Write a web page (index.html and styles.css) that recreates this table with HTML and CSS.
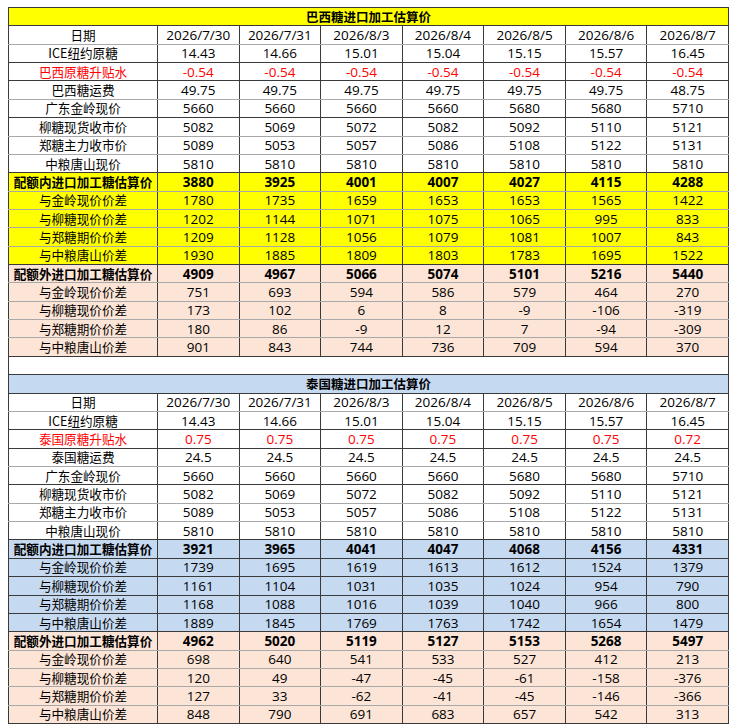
FILE: index.html
```html
<!DOCTYPE html>
<html lang="zh-CN">
<head>
<meta charset="utf-8">
<title>进口加工糖估算价</title>
<link rel="stylesheet" href="styles.css">
</head>
<body>
<table class="grid">
<colgroup><col class="c-lbl"><col><col><col><col><col><col><col></colgroup>
<tbody>
<tr class="title yellow"><td colspan="8">巴西糖进口加工估算价</td></tr>
<tr class="lt"><td class="lbl">日期</td><td>2026/7/30</td><td>2026/7/31</td><td>2026/8/3</td><td>2026/8/4</td><td>2026/8/5</td><td>2026/8/6</td><td>2026/8/7</td></tr>
<tr><td class="lbl">ICE纽约原糖</td><td>14.43</td><td>14.66</td><td>15.01</td><td>15.04</td><td>15.15</td><td>15.57</td><td>16.45</td></tr>
<tr class="red"><td class="lbl">巴西原糖升贴水</td><td>-0.54</td><td>-0.54</td><td>-0.54</td><td>-0.54</td><td>-0.54</td><td>-0.54</td><td>-0.54</td></tr>
<tr class="lt"><td class="lbl">巴西糖运费</td><td>49.75</td><td>49.75</td><td>49.75</td><td>49.75</td><td>49.75</td><td>49.75</td><td>48.75</td></tr>
<tr><td class="lbl">广东金岭现价</td><td>5660</td><td>5660</td><td>5660</td><td>5660</td><td>5680</td><td>5680</td><td>5710</td></tr>
<tr class="lt"><td class="lbl">柳糖现货收市价</td><td>5082</td><td>5069</td><td>5072</td><td>5082</td><td>5092</td><td>5110</td><td>5121</td></tr>
<tr class="lt"><td class="lbl">郑糖主力收市价</td><td>5089</td><td>5053</td><td>5057</td><td>5086</td><td>5108</td><td>5122</td><td>5131</td></tr>
<tr><td class="lbl">中粮唐山现价</td><td>5810</td><td>5810</td><td>5810</td><td>5810</td><td>5810</td><td>5810</td><td>5810</td></tr>
<tr class="yellow bold lt"><td class="lbl">配额内进口加工糖估算价</td><td>3880</td><td>3925</td><td>4001</td><td>4007</td><td>4027</td><td>4115</td><td>4288</td></tr>
<tr class="yellow lt"><td class="lbl">与金岭现价价差</td><td>1780</td><td>1735</td><td>1659</td><td>1653</td><td>1653</td><td>1565</td><td>1422</td></tr>
<tr class="yellow lt"><td class="lbl">与柳糖现价价差</td><td>1202</td><td>1144</td><td>1071</td><td>1075</td><td>1065</td><td>995</td><td>833</td></tr>
<tr class="yellow lt"><td class="lbl">与郑糖期价价差</td><td>1209</td><td>1128</td><td>1056</td><td>1079</td><td>1081</td><td>1007</td><td>843</td></tr>
<tr class="yellow"><td class="lbl">与中粮唐山价差</td><td>1930</td><td>1885</td><td>1809</td><td>1803</td><td>1783</td><td>1695</td><td>1522</td></tr>
<tr class="peach bold lt"><td class="lbl">配额外进口加工糖估算价</td><td>4909</td><td>4967</td><td>5066</td><td>5074</td><td>5101</td><td>5216</td><td>5440</td></tr>
<tr class="peach lt"><td class="lbl">与金岭现价价差</td><td>751</td><td>693</td><td>594</td><td>586</td><td>579</td><td>464</td><td>270</td></tr>
<tr class="peach lt"><td class="lbl">与柳糖现价价差</td><td>173</td><td>102</td><td>6</td><td>8</td><td>-9</td><td>-106</td><td>-319</td></tr>
<tr class="peach lt"><td class="lbl">与郑糖期价价差</td><td>180</td><td>86</td><td>-9</td><td>12</td><td>7</td><td>-94</td><td>-309</td></tr>
<tr class="peach"><td class="lbl">与中粮唐山价差</td><td>901</td><td>843</td><td>744</td><td>736</td><td>709</td><td>594</td><td>370</td></tr>
<tr class="spacer"><td colspan="8"></td></tr>
<tr class="title blue"><td colspan="8">泰国糖进口加工估算价</td></tr>
<tr class="lt"><td class="lbl">日期</td><td>2026/7/30</td><td>2026/7/31</td><td>2026/8/3</td><td>2026/8/4</td><td>2026/8/5</td><td>2026/8/6</td><td>2026/8/7</td></tr>
<tr><td class="lbl">ICE纽约原糖</td><td>14.43</td><td>14.66</td><td>15.01</td><td>15.04</td><td>15.15</td><td>15.57</td><td>16.45</td></tr>
<tr class="red"><td class="lbl">泰国原糖升贴水</td><td>0.75</td><td>0.75</td><td>0.75</td><td>0.75</td><td>0.75</td><td>0.75</td><td>0.72</td></tr>
<tr class="lt"><td class="lbl">泰国糖运费</td><td>24.5</td><td>24.5</td><td>24.5</td><td>24.5</td><td>24.5</td><td>24.5</td><td>24.5</td></tr>
<tr><td class="lbl">广东金岭现价</td><td>5660</td><td>5660</td><td>5660</td><td>5660</td><td>5680</td><td>5680</td><td>5710</td></tr>
<tr class="lt"><td class="lbl">柳糖现货收市价</td><td>5082</td><td>5069</td><td>5072</td><td>5082</td><td>5092</td><td>5110</td><td>5121</td></tr>
<tr class="lt"><td class="lbl">郑糖主力收市价</td><td>5089</td><td>5053</td><td>5057</td><td>5086</td><td>5108</td><td>5122</td><td>5131</td></tr>
<tr><td class="lbl">中粮唐山现价</td><td>5810</td><td>5810</td><td>5810</td><td>5810</td><td>5810</td><td>5810</td><td>5810</td></tr>
<tr class="blue bold"><td class="lbl">配额内进口加工糖估算价</td><td>3921</td><td>3965</td><td>4041</td><td>4047</td><td>4068</td><td>4156</td><td>4331</td></tr>
<tr class="blue"><td class="lbl">与金岭现价价差</td><td>1739</td><td>1695</td><td>1619</td><td>1613</td><td>1612</td><td>1524</td><td>1379</td></tr>
<tr class="blue"><td class="lbl">与柳糖现价价差</td><td>1161</td><td>1104</td><td>1031</td><td>1035</td><td>1024</td><td>954</td><td>790</td></tr>
<tr class="blue"><td class="lbl">与郑糖期价价差</td><td>1168</td><td>1088</td><td>1016</td><td>1039</td><td>1040</td><td>966</td><td>800</td></tr>
<tr class="blue"><td class="lbl">与中粮唐山价差</td><td>1889</td><td>1845</td><td>1769</td><td>1763</td><td>1742</td><td>1654</td><td>1479</td></tr>
<tr class="peach bold lt"><td class="lbl">配额外进口加工糖估算价</td><td>4962</td><td>5020</td><td>5119</td><td>5127</td><td>5153</td><td>5268</td><td>5497</td></tr>
<tr class="peach lt"><td class="lbl">与金岭现价价差</td><td>698</td><td>640</td><td>541</td><td>533</td><td>527</td><td>412</td><td>213</td></tr>
<tr class="peach lt"><td class="lbl">与柳糖现价价差</td><td>120</td><td>49</td><td>-47</td><td>-45</td><td>-61</td><td>-158</td><td>-376</td></tr>
<tr class="peach lt"><td class="lbl">与郑糖期价价差</td><td>127</td><td>33</td><td>-62</td><td>-41</td><td>-45</td><td>-146</td><td>-366</td></tr>
<tr class="peach"><td class="lbl">与中粮唐山价差</td><td>848</td><td>790</td><td>691</td><td>683</td><td>657</td><td>542</td><td>313</td></tr>
</tbody>
</table>
</body>
</html>
```

FILE: styles.css
```css
html, body {
  margin: 0;
  padding: 0;
  background: #ffffff;
}

body {
  padding: 7px 0 0 8px;
  font-family: "Open Sans", "Noto Sans CJK SC", sans-serif;
  color: #000000;
}

.grid {
  border-collapse: collapse;
  table-layout: fixed;
  width: 721px;
  font-size: 13.5px;
}

.c-lbl {
  width: 149px;
}

.grid tr {
  height: 18.36px;
}

.grid td {
  padding: 0;
  line-height: 12px;
  vertical-align: middle;
  text-align: center;
  white-space: nowrap;
  overflow: hidden;
  border: 1px solid #3a3a3a;
}

.grid td.lbl {
  font-family: "Noto Sans CJK SC", sans-serif;
  font-size: 12.6px;
}

.grid td:nth-child(8) {
  border-left-color: #b4b4b4;
}

.grid tr.lt td {
  border-bottom-color: #a8a8a8;
}

.title td {
  font-family: "Noto Sans CJK SC", sans-serif;
  font-weight: bold;
  font-size: 12.5px;
}

.yellow td {
  background: #ffff00;
}

.blue td {
  background: #c5d9f1;
}

.peach td {
  background: #fce4d6;
}

.bold td {
  font-weight: bold;
}

.red td {
  color: #ff0000;
}

.spacer td {
  background: #ffffff;
}
```
